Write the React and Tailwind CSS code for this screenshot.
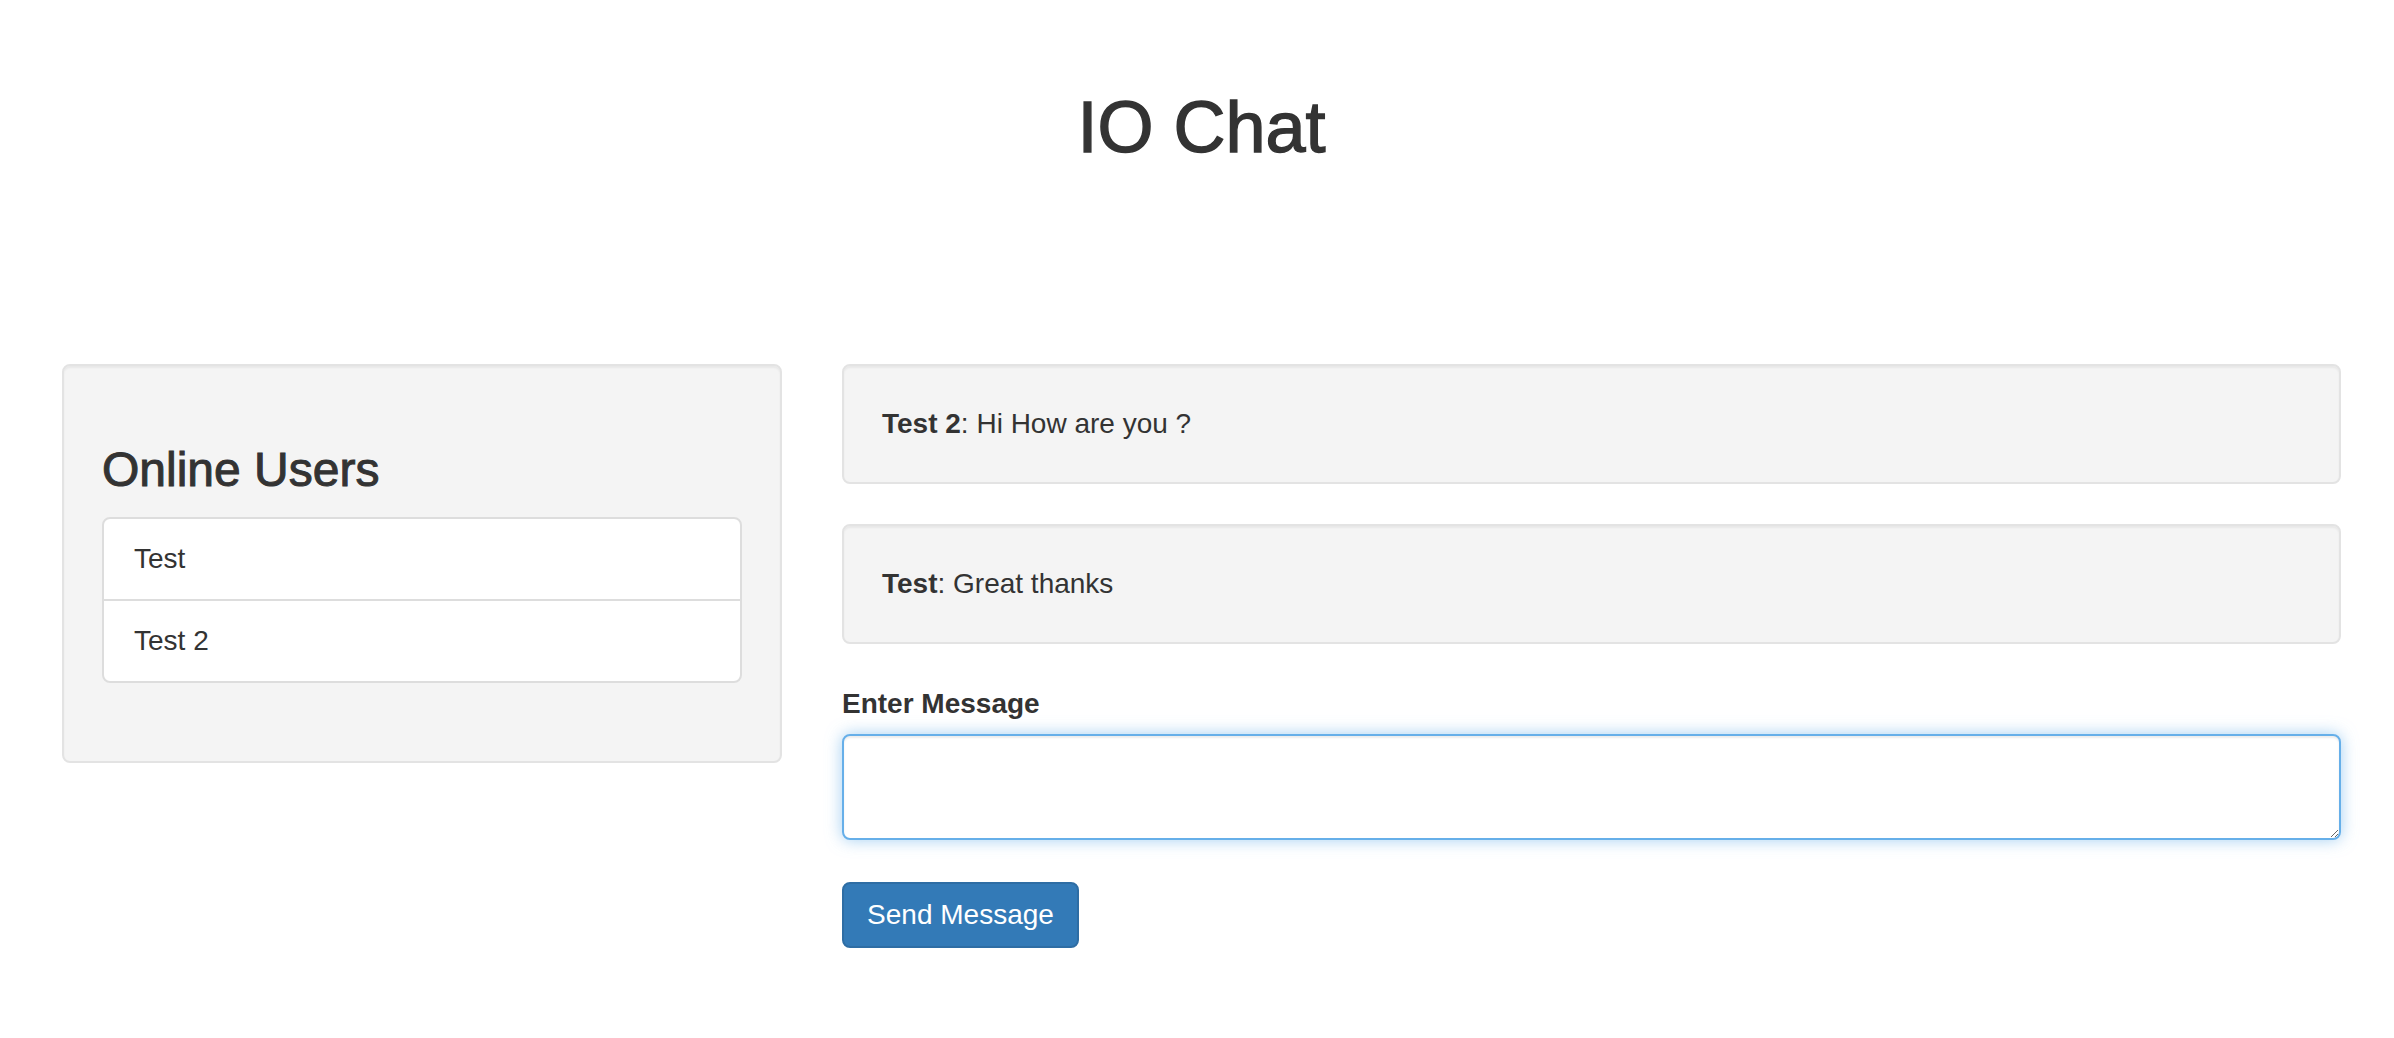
import React from "react";

export default function App() {
  return (
    <div className="min-h-screen bg-white text-[#333333] font-['Liberation_Sans',Arial,sans-serif] pl-[32px] pr-[23px]">
      <h1 className="m-0 pt-[88px] text-center text-[72px] leading-[1.1] font-medium [-webkit-text-stroke:1.4px_#333333]">IO Chat</h1>
      <div className="mt-[197px] flex items-start">
        <div className="w-[780px] shrink-0 px-[30px]">
          <div className="rounded-[8px] border-2 border-[#e3e3e3] bg-[#f4f4f4] p-[38px] shadow-[inset_0_2px_2px_rgba(0,0,0,0.05)]">
            <h3 className="mt-[40px] mb-[20px] text-[48px] leading-[1.1] font-medium [-webkit-text-stroke:1px_#333333]">Online Users</h3>
            <ul className="mb-[40px] m-0 p-0 list-none">
              <li className="relative block rounded-t-[8px] border-2 border-[#dddddd] bg-white px-[30px] py-[20px] text-[28px] leading-[40px]">
                Test
              </li>
              <li className="relative -mt-[2px] block rounded-b-[8px] border-2 border-[#dddddd] bg-white px-[30px] py-[20px] text-[28px] leading-[40px]">
                Test 2
              </li>
            </ul>
          </div>
        </div>
        <div className="min-w-0 flex-1 px-[30px]">
          <div className="mb-[40px] rounded-[8px] border-2 border-[#e3e3e3] bg-[#f4f4f4] p-[38px] text-[28px] leading-[40px] shadow-[inset_0_2px_2px_rgba(0,0,0,0.05)]">
            <strong className="font-bold">Test 2</strong>: Hi How are you ?
          </div>
          <div className="mb-[40px] rounded-[8px] border-2 border-[#e3e3e3] bg-[#f4f4f4] p-[38px] text-[28px] leading-[40px] shadow-[inset_0_2px_2px_rgba(0,0,0,0.05)]">
            <strong className="font-bold">Test</strong>: Great thanks
          </div>
          <form onSubmit={(e) => e.preventDefault()}>
            <label className="mt-[2px] mb-[10px] block text-[28px] leading-[40px] font-bold">Enter Message</label>
            <textarea
              className="block h-[106px] w-full rounded-[8px] border-2 border-[#66afe9] bg-white px-[24px] py-[12px] text-[28px] leading-[40px] text-[#555555] outline-none shadow-[inset_0_2px_2px_rgba(0,0,0,0.075),0_0_16px_rgba(102,175,233,0.6)]"
            />
            <button
              type="submit"
              className="mt-[42px] flex h-[66px] w-[237px] items-center justify-center rounded-[8px] border-2 border-[#2e6da4] bg-[#337ab7] text-[28px] text-white"
            >
              Send Message
            </button>
          </form>
        </div>
      </div>
    </div>
  );
}
